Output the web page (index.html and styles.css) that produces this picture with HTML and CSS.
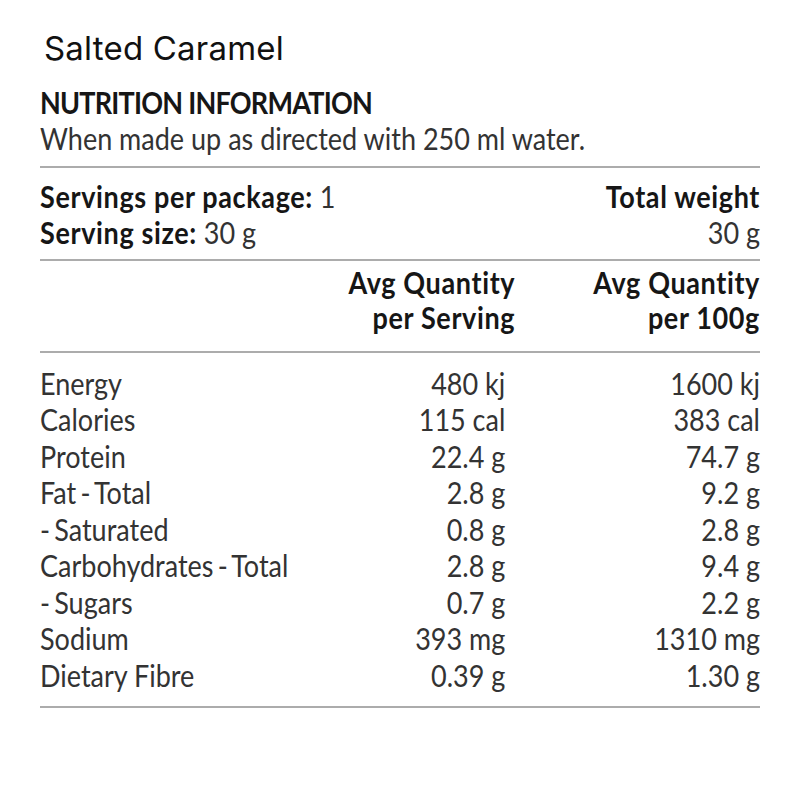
FILE: index.html
```html
<!DOCTYPE html>
<html>
<head>
<meta charset="utf-8">
<link rel="stylesheet" href="styles.css">
</head>
<body>
<div class="page">
  <div class="title">Salted Caramel</div>
  <div class="panel">
    <div class="heading">NUTRITION INFORMATION</div>
    <div class="sub">When made up as directed with 250 ml water.</div>
    <div class="servings">
      <div class="left">
        <div><b>Servings per package:</b> 1</div>
        <div><b>Serving size:</b> 30 g</div>
      </div>
      <div class="right">
        <div><b>Total weight</b></div>
        <div>30 g</div>
      </div>
    </div>
    <div class="colhead">
      <div></div>
      <div class="h2"><b>Avg Quantity<br>per Serving</b></div>
      <div class="h3"><b>Avg Quantity<br>per 100g</b></div>
    </div>
    <div class="rows">
      <div class="lbl">Energy</div><div class="v1">480 kj</div><div class="v2">1600 kj</div>
      <div class="lbl">Calories</div><div class="v1">115 cal</div><div class="v2">383 cal</div>
      <div class="lbl">Protein</div><div class="v1">22.4 g</div><div class="v2">74.7 g</div>
      <div class="lbl dash">Fat - Total</div><div class="v1">2.8 g</div><div class="v2">9.2 g</div>
      <div class="lbl dash">- Saturated</div><div class="v1">0.8 g</div><div class="v2">2.8 g</div>
      <div class="lbl dash">Carbohydrates - Total</div><div class="v1">2.8 g</div><div class="v2">9.4 g</div>
      <div class="lbl dash">- Sugars</div><div class="v1">0.7 g</div><div class="v2">2.2 g</div>
      <div class="lbl">Sodium</div><div class="v1">393 mg</div><div class="v2">1310 mg</div>
      <div class="lbl">Dietary Fibre</div><div class="v1">0.39 g</div><div class="v2">1.30 g</div>
    </div>
  </div>
</div>
</body>
</html>
```
FILE: styles.css
```css
html {
  overflow: hidden;
}
html, body {
  margin: 0;
  padding: 0;
  background: #ffffff;
}
.page {
  padding: 29px 40px 0 40px;
  width: 720px;
}
.title {
  font-family: Inter, "Liberation Sans", Arial, sans-serif;
  font-size: 33px;
  line-height: 38px;
  letter-spacing: 0.2px;
  margin-left: 4px;
  color: #111111;
}
/* condensed typeface emulated by horizontal scaling of the whole label */
.panel {
  font-family: Lato, "Open Sans", sans-serif;
  font-size: 30px;
  line-height: 36px;
  color: #333333;
  width: 800px;
  margin-top: 17px;
  transform: scaleX(0.9);
  transform-origin: 0 0;
}
.panel b {
  font-weight: 700;
  letter-spacing: 0.7px;
  color: #161616;
}
.heading {
  font-weight: 700;
  letter-spacing: -0.85px;
  color: #161616;
}
.sub {
  white-space: nowrap;
  padding-bottom: 10px;
  border-bottom: 2px solid #acacac;
}
.servings {
  display: flex;
  justify-content: space-between;
  padding-top: 10px;
  padding-bottom: 9px;
  border-bottom: 2px solid #acacac;
}
.right {
  text-align: right;
}
.colhead {
  display: grid;
  grid-template-columns: 1fr 240px 272px;
  padding-top: 4px;
  padding-bottom: 16px;
  border-bottom: 2px solid #acacac;
  line-height: 35px;
}
.h2, .h3 {
  text-align: right;
  white-space: nowrap;
}
.rows {
  display: grid;
  grid-template-columns: 1fr 240px 283px;
  line-height: 36.5px;
  padding-top: 11.75px;
  padding-bottom: 12.75px;
  border-bottom: 2px solid #acacac;
  white-space: nowrap;
}
.dash {
  word-spacing: -3px;
}
.v1, .v2 {
  text-align: right;
}
```
